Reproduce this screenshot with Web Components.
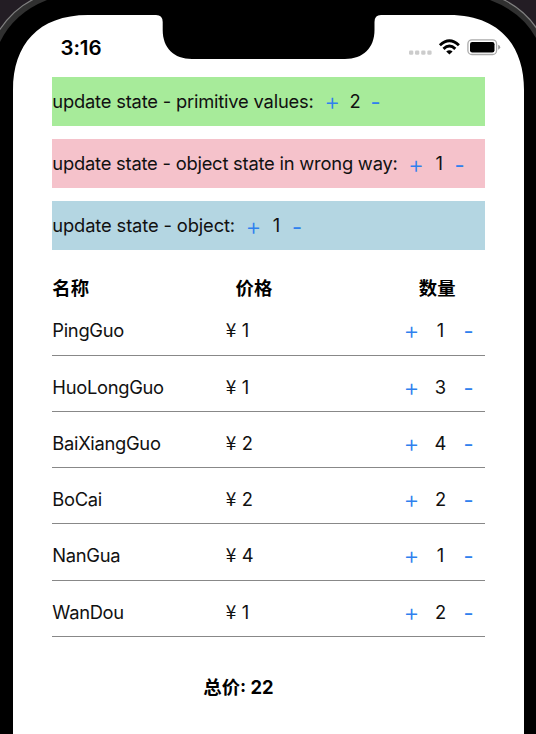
<!DOCTYPE html>
<html lang="zh"><head><meta charset="utf-8"><title>State</title>
<style>
body{margin:0;background:#000;width:536px;height:734px;overflow:hidden}
</style></head><body>
<phone-frame>
  <status-bar slot="status" time="3:16"></status-bar>
  <state-bar color="#a7eb9a" label="update state - primitive values:" value="2" spacing="-.2px"></state-bar>
  <state-bar color="#f5c2cb" label="update state - object state in wrong way:" value="1" spacing="-.22px"></state-bar>
  <state-bar color="#b4d6e2" label="update state - object:" value="1" spacing="-.14px"></state-bar>
  <goods-table></goods-table>
</phone-frame>
<script>
const make=(el,html)=>{el.attachShadow({mode:'open'}).innerHTML=html;};
customElements.define('phone-frame',class extends HTMLElement{connectedCallback(){make(this,`
<style>
:host{display:block;position:relative;width:536px;height:734px;font:18.35px/24px Inter,"Noto Sans CJK SC",sans-serif;color:#111}
svg{position:absolute;inset:0}
.screen{position:relative;display:flex;flex-direction:column;padding:0 51.5px 0 52.3px}
.status{height:76.6px}
.bars{display:flex;flex-direction:column;gap:13.3px}
</style>
<svg width="536" height="734" viewBox="0 0 536 734">
<rect width="536" height="734" fill="#231d24"/>
<path d="M-3 734V34Q12 9 36 -2H500Q525 9 539 32V734Z" fill="#303030" stroke="#808080" stroke-width="1.2"/>
<path d="M0 734V42Q14 13 47 0H490Q522 12 536 38V734Z" fill="#000"/>
<path d="M13 734V90C13 45 38 15 88 15H156Q162.700 15 162.700 22V30C162.700 48 174 59 192 59H345C363 59 374.500 48 374.500 30V22Q374.500 15 381 15H449C499 15 524 45 524 90V734Z" fill="#fff"/>
</svg>
<div class="screen"><div class="status"><slot name="status"></slot></div><div class="bars"><slot></slot></div></div>`)}});
customElements.define('status-bar',class extends HTMLElement{connectedCallback(){make(this,`
<style>:host{display:flex;justify-content:space-between;padding:36px 0 0 8.2px;margin-right:-17px;height:24px;color:#000}
span{font-size:20.500px;font-weight:600;letter-spacing:-.1px;line-height:24px}</style>
<span>${this.getAttribute('time')}</span>
<svg width="94" height="24" viewBox="408 36 94 24">
<g fill="#ccc"><rect x="409" y="50.500" width="4.300" height="4.300" rx="1.300"/><rect x="415" y="50.500" width="4.300" height="4.300" rx="1.300"/><rect x="421.200" y="50.500" width="4.300" height="4.300" rx="1.300"/><rect x="427.300" y="50.500" width="4.300" height="4.300" rx="1.300"/></g>
<g fill="none" stroke="#000" stroke-width="2.900"><path d="M439.900 45.200Q449.400 36.200 458.900 45.200"/><path d="M443.500 48.900Q449.400 43.200 455.300 48.900"/></g>
<path d="M449.400 54.600L446.200 51.500Q449.400 48.800 452.600 51.500Z"/>
<rect x="467.900" y="39.900" width="28.700" height="14.600" rx="4" fill="none" stroke="#aaa" stroke-width="1.300"/><rect x="470" y="42" width="24.500" height="10.400" rx="2.200"/><path d="M498.200 44.800Q500.200 45.800 500.200 47.200T498.200 49.700Z" fill="#999"/>
</svg>`)}});
customElements.define('step-button',class extends HTMLElement{connectedCallback(){make(this,`
<style>:host{display:flex;justify-content:center;height:24px;color:#2f80ee;font-size:22px;line-height:24px;cursor:pointer}
:host(.plus){width:18px;font-size:24.500px;font-weight:350}
:host(.minus){width:14px}</style><slot></slot>`)}});
customElements.define('state-bar',class extends HTMLElement{connectedCallback(){make(this,`
<style>:host{display:flex;align-items:center;height:49.100px;background:${this.getAttribute('color')}}
span{padding-bottom:1px}.label{letter-spacing:${this.getAttribute('spacing')}}
.v{width:12px;margin:0 7.500px 0 8px;text-align:center}.plus{margin-left:9.500px}.minus{padding-top:2px}</style>
<span class="label">${this.getAttribute('label')}</span><step-button class="plus">+</step-button><span class="v">${this.getAttribute('value')}</span><step-button class="minus">-</step-button>`)}});
customElements.define('goods-row',class extends HTMLElement{connectedCallback(){const[n,p,q]=this.getAttribute('data').split(',');make(this,`
<style>:host{display:grid;grid-template-columns:173.500px 1fr 82px;align-items:end;height:55.250px;border-bottom:1px solid #888;box-sizing:content-box}
div{padding-bottom:12.400px}.n{letter-spacing:-.3px}.p{display:flex}.y{font-family:"Noto Sans CJK SC",sans-serif;font-size:19px;line-height:22.500px;width:16px}
.q{display:flex;padding-bottom:11.400px}.q span{width:14px;margin:0 14px 0 13px;text-align:center}.minus{padding-top:1px}</style>
<div class="n">${n}</div><div class="p"><span class="y">¥</span><span>${p}</span></div>
<div class="q"><step-button class="plus">+</step-button><span>${q}</span><step-button class="minus">-</step-button></div>`)}});
customElements.define('goods-table',class extends HTMLElement{connectedCallback(){const rows=['PingGuo,1,1','HuoLongGuo,1,3','BaiXiangGuo,2,4','BoCai,2,2','NanGua,4,1','WanDou,1,2'];make(this,`
<style>:host{display:block;padding-top:12.500px}
.h{display:flex;justify-content:space-between;height:23.200px;padding-right:29px;font-weight:600;color:#000}
.total{margin:37.800px 0 0 151px;font-weight:700;color:#000}</style>
<div class="h"><span>名称</span><span>价格</span><span>数量</span></div>
${rows.map(r=>`<goods-row data="${r}"></goods-row>`).join('')}
<div class="total">总价: 22</div>`)}});
</script></body></html>
